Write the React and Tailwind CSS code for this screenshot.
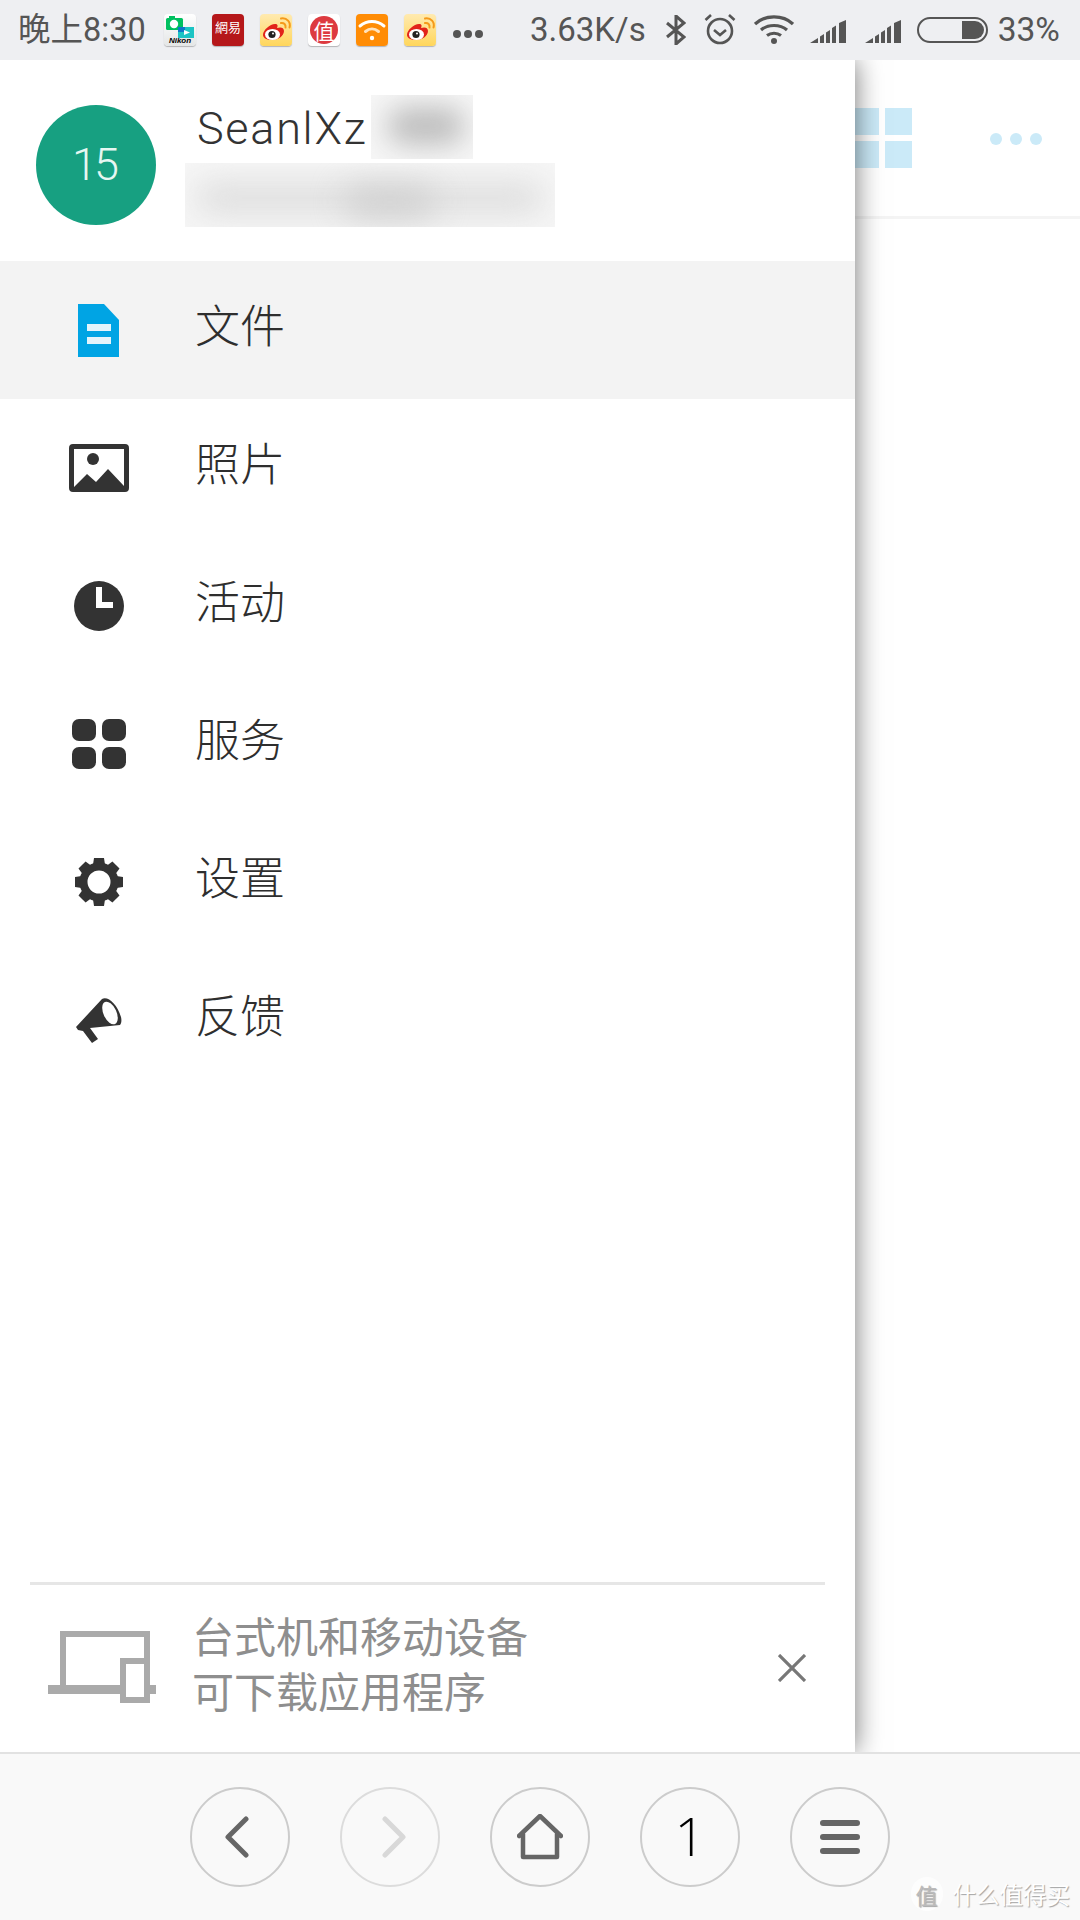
import React from "react";

const sans = "font-['Noto_Sans_CJK_SC','Noto_Sans',sans-serif]";

function Weibo() {
  return (
    <svg width="32" height="32" viewBox="0 0 32 32" className="rounded-[4px] shadow-[0_1px_1px_rgba(0,0,0,0.25)]">
      <defs>
        <linearGradient id="wb" x1="0" y1="0" x2="0" y2="1">
          <stop offset="0" stopColor="#ffeab0" />
          <stop offset="1" stopColor="#ffd65c" />
        </linearGradient>
      </defs>
      <rect width="32" height="32" fill="url(#wb)" />
      <path d="M3 21c0-5 7-11 12-11 3 0 3 2 2 4 3-1 7-1 7 3 0 5-6 9-12 9-5 0-9-2-9-5z" fill="#e2231a" />
      <ellipse cx="12.5" cy="20.5" rx="7.5" ry="5.5" fill="#fff" />
      <circle cx="12" cy="20.5" r="3.6" fill="#222" />
      <circle cx="13" cy="19.5" r="1" fill="#fff" />
      <path d="M21 9c3-.5 5 1.500 4.500 4.500M21 4.500c6-1 10 3.500 8.500 9" fill="none" stroke="#f59a1b" strokeWidth="2" strokeLinecap="round" />
    </svg>
  );
}

function Nikon() {
  return (
    <div className="relative w-[32px] h-[32px] rounded-[4px] overflow-hidden bg-gradient-to-b from-white to-[#e4e6e6] shadow-[0_1px_1px_rgba(0,0,0,0.25)]">
      <svg width="32" height="32" viewBox="0 0 32 32" className="absolute inset-0">
        <rect x="2" y="4" width="17" height="12" rx="1.500" fill="#00c060" />
        <rect x="5" y="2" width="6" height="3" fill="#00c060" />
        <circle cx="10" cy="10" r="4.200" fill="#fff" />
        <rect x="14" y="13" width="16" height="11" fill="#1cc4c4" />
        <rect x="14" y="13" width="7" height="5" fill="#0e78c8" />
        <path d="M20 16l6 2.500-6 2.500z" fill="#fff" />
      </svg>
      <span className="absolute left-0 right-0 bottom-[1px] text-center text-[8px] leading-[9px] font-bold italic text-black font-['Liberation_Sans',sans-serif]">Nikon</span>
    </div>
  );
}

function Netease() {
  return (
    <div className="w-[32px] h-[32px] rounded-[4px] bg-[#b5171a] flex items-start justify-center pt-[5px] shadow-[0_1px_1px_rgba(0,0,0,0.25)]">
      <span className="text-[13px] leading-[16px] text-white font-['Noto_Sans_CJK_TC',sans-serif] whitespace-nowrap">網易</span>
    </div>
  );
}

function Zhi() {
  return (
    <div className="w-[32px] h-[32px] rounded-[4px] bg-white flex items-center justify-center shadow-[0_1px_1px_rgba(0,0,0,0.25)]">
      <div className="w-[28px] h-[28px] rounded-full bg-[#dd3a40] flex items-center justify-center">
        <span className="text-[21px] leading-[24px] text-white font-['Noto_Sans_CJK_SC',sans-serif]">值</span>
      </div>
    </div>
  );
}

function WifiApp() {
  return (
    <svg width="32" height="32" viewBox="0 0 32 32" className="rounded-[4px] shadow-[0_1px_1px_rgba(0,0,0,0.25)]">
      <rect width="32" height="32" fill="#ff8c05" />
      <path d="M4 12c7-6 17-6 24 0" fill="none" stroke="#fff" strokeWidth="3" strokeLinecap="round" />
      <path d="M9.500 17.500c4-3.500 9-3.500 13 0" fill="none" stroke="#ffe2bd" strokeWidth="3" strokeLinecap="round" />
      <circle cx="16" cy="24" r="2.200" fill="#fff" />
    </svg>
  );
}

function Signal() {
  return (
    <svg width="37" height="26" viewBox="0 0 37 26" fill="#555">
      <path d="M0 26l8-5v5zM10 19.500l4-2.500v9h-4zM16 15.500l4-2.500v13h-4zM22 11l4-2.500v17.500h-4zM29 6l7-3v23h-7z" />
    </svg>
  );
}

function StatusBar() {
  return (
    <div className={`h-[60px] shrink-0 bg-[#eeeff2] flex items-center pl-[18px] text-[#555] relative z-20 ${sans}`}>
      <span className="text-[32.500px] leading-[60px] w-[146px] whitespace-nowrap font-['Roboto','Noto_Sans_CJK_SC',sans-serif]">晚上8:30</span>
      <div className="flex gap-[16px] items-center">
        <Nikon />
        <Netease />
        <Weibo />
        <Zhi />
        <WifiApp />
        <Weibo />
      </div>
      <div className="flex gap-[3px] ml-[17px] mt-[8px]">
        <i className="block w-[8px] h-[8px] rounded-full bg-[#555]" />
        <i className="block w-[8px] h-[8px] rounded-full bg-[#555]" />
        <i className="block w-[8px] h-[8px] rounded-full bg-[#555]" />
      </div>
      <span className="ml-[47px] text-[33px] leading-[60px] whitespace-nowrap font-['Roboto',sans-serif]">3.63K/s</span>
      <svg className="ml-[20px]" width="20" height="30" viewBox="0 0 20 30" fill="none" stroke="#555" strokeWidth="3">
        <path d="M1 8l17 14-8 7V1l8 7L1 22" />
      </svg>
      <svg className="ml-[18px] -mt-[2px]" width="32" height="32" viewBox="0 0 32 32" fill="none" stroke="#555" strokeWidth="2.600">
        <circle cx="16" cy="18" r="12" />
        <path d="M10 17l6 5 6-5M1.500 7L7 2M30.500 7L25 2" />
      </svg>
      <svg className="ml-[18px]" width="40" height="30" viewBox="0 0 40 30" fill="none" stroke="#555" strokeWidth="3.200">
        <path d="M1 9c10-9.500 28-9.500 38 0M7 15c7-6 19-6 26 0M13 20.500c4-3 10-3 14 0" />
        <circle cx="20" cy="26" r="3" fill="#555" stroke="none" />
      </svg>
      <div className="ml-[16px]"><Signal /></div>
      <div className="ml-[18px]"><Signal /></div>
      <div className="ml-[15px] w-[71px] h-[26px] rounded-full border-[2px] border-[#555] flex justify-end items-center pr-[2px]">
        <div className="w-[22px] h-[18px] bg-[#555] rounded-r-full" />
      </div>
      <span className="ml-[10px] text-[33.500px] leading-[60px] whitespace-nowrap font-['Roboto',sans-serif]">33%</span>
    </div>
  );
}

function Blur({ className, children }) {
  return <div className={`overflow-hidden bg-[#f6f6f6] relative ${className}`}>{children}</div>;
}

function IconFile() {
  return (
    <svg width="41" height="53" viewBox="0 0 41 53" className="-ml-[1px]">
      <path d="M0 0h26l15 16v37H0z" fill="#00a4e4" />
      <rect x="9" y="20" width="24" height="7" fill="#e4f4fb" />
      <rect x="9" y="33" width="24" height="7" fill="#e4f4fb" />
    </svg>
  );
}
function IconPhoto() {
  return (
    <svg width="60" height="48" viewBox="0 0 60 48">
      <rect x="2.500" y="2.500" width="55" height="43" rx="1.500" fill="#fff" stroke="#333" strokeWidth="5" />
      <circle cx="24" cy="15" r="6" fill="#333" />
      <path d="M5 43l13-13 9 8 12-13 16 17v3H5z" fill="#333" />
    </svg>
  );
}
function IconClock() {
  return (
    <svg width="50" height="50" viewBox="0 0 50 50">
      <circle cx="25" cy="25" r="25" fill="#333" />
      <path d="M22 6h6v15h11v6H22z" fill="#fff" />
    </svg>
  );
}
function IconApps() {
  return (
    <svg width="54" height="50" viewBox="0 0 54 50" fill="#333">
      <rect x="0" y="0" width="24" height="22" rx="7" />
      <rect x="30" y="0" width="24" height="22" rx="7" />
      <rect x="0" y="28" width="24" height="22" rx="7" />
      <rect x="30" y="28" width="24" height="22" rx="7" />
    </svg>
  );
}
function IconGear() {
  const angles = [0, 45, 90, 135, 180, 225, 270, 315];
  return (
    <svg width="48" height="48" viewBox="0 0 48 48">
      {angles.map((a) => (
        <path key={a} d="M19 0h10l1.500 10h-13z" fill="#333" transform={`rotate(${a} 24 24)`} />
      ))}
      <circle cx="24" cy="24" r="15.500" fill="none" stroke="#333" strokeWidth="8" />
    </svg>
  );
}
function IconHorn() {
  return (
    <svg width="46" height="45" viewBox="0 0 46 45">
      <path d="M0 29L26 1c6-3 15 5 19 18 1 4 0 7-1 8L14 30l8 11-6 4-9-12-5-1z" fill="#333" />
      <ellipse cx="34" cy="15" rx="6.500" ry="12" transform="rotate(-25 34 15)" fill="#fff" />
    </svg>
  );
}

function Row({ icon, label, active }) {
  return (
    <div className={`h-[138px] flex items-center ${active ? "bg-[#f3f3f3]" : ""}`}>
      <div className="w-[198px] flex justify-center shrink-0">{icon}</div>
      <span className={`text-[45px] leading-[60px] font-light text-[#2e2e2e] -ml-[3px] -mt-[13px] ${sans}`}>{label}</span>
    </div>
  );
}

function Drawer() {
  return (
    <div className="absolute left-0 top-0 bottom-0 w-[855px] bg-white shadow-[0_0_26px_rgba(0,0,0,0.55)] flex flex-col">
      <div className="h-[201px] shrink-0 flex pl-[36px] pt-[45px]">
        <div className="w-[120px] h-[120px] rounded-full bg-[#17a081] flex items-center justify-center">
          <span className="text-[45px] tracking-[-3px] -ml-[4px] text-[#e6f7f2] font-light font-['Roboto',sans-serif]">15</span>
        </div>
        <div className="ml-[29px] flex flex-col -mt-[10px]">
          <div className="flex items-center h-[64px] ml-[12px]">
            <span className="text-[45px] leading-[64px] text-[#333] font-light tracking-[1.700px] mt-[4px] font-['Roboto',sans-serif]">SeanlXz</span>
            <Blur className="w-[102px] h-[64px] ml-[4px]">
              <div className="absolute left-[16px] top-[12px] w-[78px] h-[38px] rounded-full bg-[#bdbdbd] blur-[14px]" />
            </Blur>
          </div>
          <Blur className="w-[370px] h-[64px] mt-[4px]">
            <div className="absolute left-[10px] top-[20px] w-[350px] h-[30px] rounded-full bg-[#dcdcdc] blur-[16px]" />
            <div className="absolute left-[160px] top-[24px] w-[90px] h-[30px] rounded-full bg-[#cfcfcf] blur-[16px]" />
          </Blur>
        </div>
      </div>
      <Row active label="文件" icon={<IconFile />} />
      <Row label="照片" icon={<IconPhoto />} />
      <Row label="活动" icon={<IconClock />} />
      <Row label="服务" icon={<IconApps />} />
      <Row label="设置" icon={<IconGear />} />
      <Row label="反馈" icon={<IconHorn />} />
      <div className="flex-1" />
      <div className="mx-[30px] h-[3px] bg-[#e6e6e6]" />
      <div className="h-[167px] shrink-0 flex items-center pl-[48px] pr-[49px]">
        <svg width="108" height="72" viewBox="0 0 108 72" className="shrink-0 -mt-[4px]" fill="none">
          <path d="M15 54V3h84v56" stroke="#aaa" strokeWidth="6" />
          <rect x="0" y="54" width="108" height="9" fill="#aaa" />
          <rect x="75" y="30" width="24" height="39" fill="#fff" stroke="#aaa" strokeWidth="6" />
        </svg>
        <div className={`ml-[36px] text-[42px] leading-[55px] text-[#8e8e8e] whitespace-nowrap -mt-[14px] ${sans}`}>
          <div>台式机和移动设备</div>
          <div>可下载应用程序</div>
        </div>
        <svg width="28" height="28" viewBox="0 0 28 28" className="ml-auto -mt-[2px]" stroke="#777" strokeWidth="3.200">
          <path d="M1 1l26 26M27 1L1 27" />
        </svg>
      </div>
    </div>
  );
}

function Behind() {
  return (
    <div className="h-[159px] border-b-[3px] border-[#f4f4f4] flex justify-end">
      <div className="grid grid-cols-2 gap-[6px] self-start mt-[48px] w-[60px] h-[60px]">
        <i className="block bg-[#cbeaf8]" />
        <i className="block bg-[#cbeaf8]" />
        <i className="block bg-[#cbeaf8]" />
        <i className="block bg-[#cbeaf8]" />
      </div>
      <div className="flex gap-[8px] self-start mt-[73px] mr-[38px] ml-[78px]">
        <i className="block w-[12px] h-[12px] rounded-full bg-[#cbeaf8]" />
        <i className="block w-[12px] h-[12px] rounded-full bg-[#cbeaf8]" />
        <i className="block w-[12px] h-[12px] rounded-full bg-[#cbeaf8]" />
      </div>
    </div>
  );
}

function Circle({ children, light }) {
  return (
    <div className={`w-[100px] h-[100px] rounded-full border-[2px] flex items-center justify-center ${light ? "border-[#dcdcdc]" : "border-[#cccccc]"}`}>
      {children}
    </div>
  );
}

function BottomNav() {
  return (
    <div className="h-[168px] shrink-0 bg-[#f9f9f9] border-t-[2px] border-[#e2e2e2] flex justify-center gap-[50px] pt-[33px] relative z-10">
      <Circle>
        <svg width="26" height="42" viewBox="0 0 26 42" fill="none" stroke="#666" strokeWidth="5" strokeLinecap="round" strokeLinejoin="round" className="-ml-[7px]">
          <path d="M22 3L4 21l18 18" />
        </svg>
      </Circle>
      <Circle light>
        <svg width="26" height="42" viewBox="0 0 26 42" fill="none" stroke="#d8d8d8" strokeWidth="5" strokeLinecap="round" strokeLinejoin="round" className="ml-[7px]">
          <path d="M4 3l18 18L4 39" />
        </svg>
      </Circle>
      <Circle>
        <svg width="46" height="46" viewBox="0 0 46 46" fill="none" stroke="#666" strokeWidth="4.500" strokeLinecap="round" strokeLinejoin="round">
          <path d="M2 22L23 2l21 20M6 20v23h34V20" />
        </svg>
      </Circle>
      <Circle>
        <span className="text-[54px] leading-[60px] font-light text-black -mt-[4px] font-['Open_Sans',sans-serif]">1</span>
      </Circle>
      <Circle>
        <div className="flex flex-col gap-[8px]">
          <i className="block w-[40px] h-[6px] rounded-full bg-[#666]" />
          <i className="block w-[40px] h-[6px] rounded-full bg-[#666]" />
          <i className="block w-[40px] h-[6px] rounded-full bg-[#666]" />
        </div>
      </Circle>
      <div className="absolute right-[10px] bottom-[9px] flex items-center gap-[10px] text-white [text-shadow:1px_1px_1px_rgba(0,0,0,0.35)]">
        <div className="w-[32px] h-[34px] rounded-full bg-white/70 flex items-center justify-center">
          <span className="text-[22px] leading-[24px] text-[#bbb] font-['Noto_Sans_CJK_SC',sans-serif]">值</span>
        </div>
        <span className="text-[23.500px] leading-[30px] whitespace-nowrap font-['Noto_Sans_CJK_SC',sans-serif]">什么值得买</span>
      </div>
    </div>
  );
}

export default function App() {
  return (
    <div className="w-[1080px] h-[1920px] flex flex-col overflow-hidden bg-white">
      <StatusBar />
      <div className="flex-1 relative overflow-hidden">
        <Behind />
        <Drawer />
      </div>
      <BottomNav />
    </div>
  );
}
